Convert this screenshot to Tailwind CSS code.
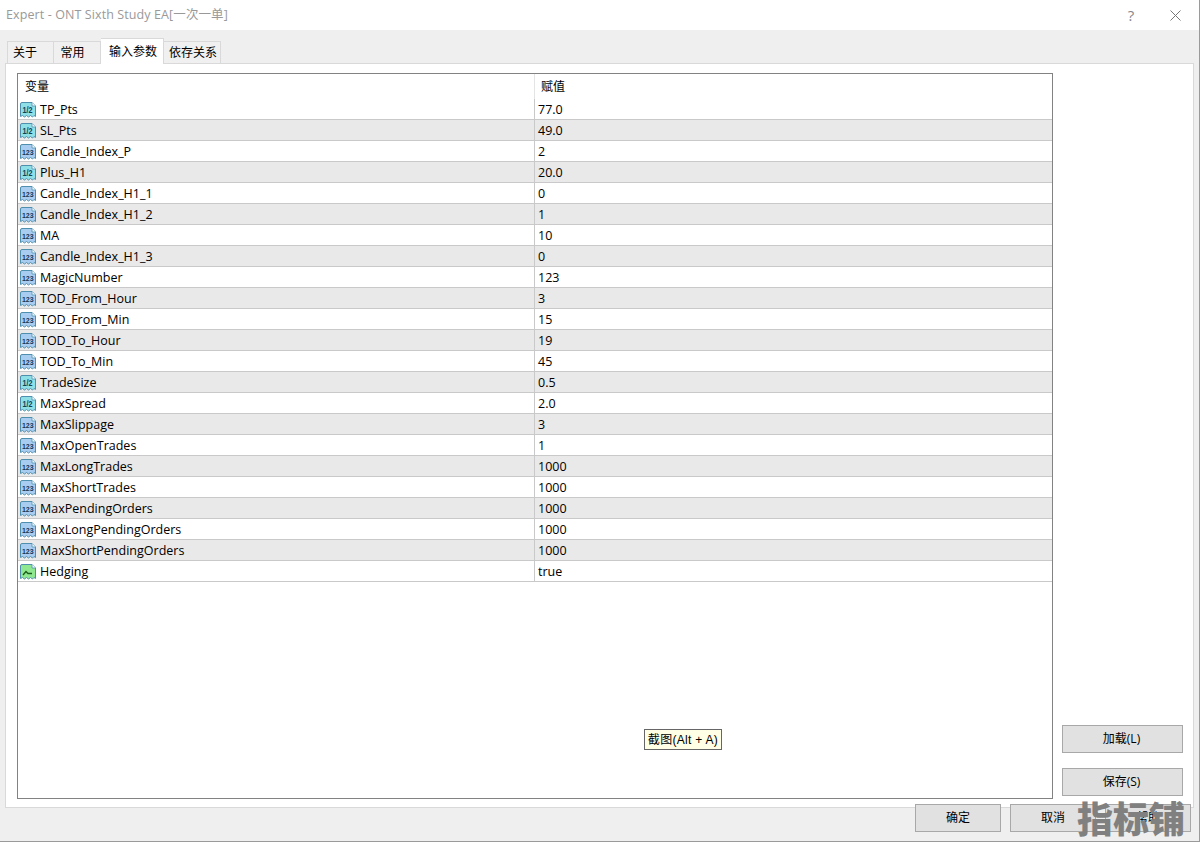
<!DOCTYPE html>
<html lang="zh-CN">
<head>
<meta charset="UTF-8">
<title>Expert - ONT Sixth Study EA</title>
<script src="https://cdn.jsdelivr.net/npm/@tailwindcss/browser@4"></script>
</head>
<body class="h-[842px] w-[1200px] overflow-hidden bg-[#efefef] text-[12.5px] text-black font-['Open_Sans','Noto_Sans_CJK_SC',sans-serif]">

<svg class="hidden">
  <symbol id="file" viewBox="0 0 16 16">
    <path d="M0.5 2 Q0.5 0.5 2 0.5 H12 L15.5 4 V14.5 L14 13.5 L12.5 15 L10.5 13.5 L8.5 15 L6.5 13.5 L4.5 15 L2.5 13.5 L0.5 14.5 Z" fill="currentColor" stroke="#4f8fae" stroke-width="1"/>
    <path d="M12 0.5 V4 H15.5" fill="#f4fbff" stroke="#4f8fae" stroke-width="0.8"/>
  </symbol>
</svg>

<div class="relative h-[842px] border-r border-b border-[#9a9a9a]">
  <!-- title bar -->
  <header class="flex h-[30px] items-center bg-white pl-[6px] text-[#999999]">
    <span class="flex-1 tracking-[0.1px]">Expert - ONT Sixth Study EA[一次一单]</span>
    <span class="w-[14px] text-center text-[15px] text-[#888888]">?</span>
    <svg class="ml-[32px] mr-[18px] h-[11px] w-[11px]" viewBox="0 0 11 11"><path d="M0.5 0.5 L10.5 10.5 M10.5 0.5 L0.5 10.5" stroke="#777777" fill="none"/></svg>
  </header>

  <!-- tabs -->
  <nav class="flex h-[33px] items-end pl-[7px] text-[12px]">
    <div class="flex h-[22px] w-[47px] items-center justify-center border border-b-0 border-[#d9d9d9] bg-[#f0f0f0] pr-[11px]">关于</div>
    <div class="flex h-[22px] w-[47px] items-center justify-center border border-l-0 border-b-0 border-[#d9d9d9] bg-[#f0f0f0] pr-[9px]">常用</div>
    <div class="relative z-10 -mb-px flex h-[26px] w-[63px] items-center justify-center border border-l-0 border-b-0 border-[#d9d9d9] bg-white pl-[2px]">输入参数</div>
    <div class="flex h-[22px] w-[57px] items-center justify-center border border-l-0 border-b-0 border-[#d9d9d9] bg-[#f0f0f0] pl-[2px]">依存关系</div>
  </nav>

  <!-- panel -->
  <main class="mx-[5px] flex h-[745px] border border-[#d9d9d9] bg-white pb-[8px] pl-[11px] pt-[9px]">
    <section class="h-[726px] w-[1036px] border border-[#828282]">
      <div class="flex h-[25px] items-center">
        <div class="w-[517px] border-r border-[#e4e4e4] pl-[7px] text-[12px] leading-[25px]">变量</div>
        <div class="pl-[6px] text-[12px] leading-[25px]">赋值</div>
      </div>
      <div id="rows"></div>
    </section>
    <aside class="ml-[9px] flex w-[121px] flex-col justify-end gap-[15px] pb-[3px]">
      <button class="h-[28px] border border-[#a8a8a8] bg-[#e1e1e1] pr-[2px] text-[12px]">加载(L)</button>
      <button class="h-[28px] border border-[#a8a8a8] bg-[#e1e1e1] pr-[2px] text-[12px]">保存(S)</button>
    </aside>
  </main>

  <!-- footer buttons -->
  <footer class="relative z-10 -mt-[4px] flex justify-end gap-[9px] pr-[8px]">
    <button class="h-[28px] w-[86px] border border-[#a8a8a8] bg-[#e1e1e1] text-[12px]">确定</button>
    <button class="h-[28px] w-[86px] border border-[#a8a8a8] bg-[#e1e1e1] text-[12px]">取消</button>
    <button class="h-[28px] w-[86px] border border-[#a8a8a8] bg-[#e1e1e1] text-[12px]">帮助</button>
  </footer>

  <!-- screenshot tooltip -->
  <div class="absolute left-[644px] top-[729px] z-20 flex h-[21px] w-[78px] items-center justify-center border border-[#666666] bg-[#ffffe6] text-[12px] tracking-[0.3px] font-['Liberation_Sans','Noto_Sans_CJK_SC',sans-serif]">截图(Alt + A)</div>

  <!-- watermark -->
  <div class="absolute left-[1077px] top-[794px] z-30 text-[36px] font-black leading-[46px] text-[#808080] font-['Noto_Sans_CJK_SC',sans-serif]">指标铺</div>
</div>

<script>
  // r = 整数 (123), d = 小数 (1/2), b = 布尔
  const params = [
    ["TP_Pts", "77.0", "d"], ["SL_Pts", "49.0", "d"], ["Candle_Index_P", "2", "r"],
    ["Plus_H1", "20.0", "d"], ["Candle_Index_H1_1", "0", "r"], ["Candle_Index_H1_2", "1", "r"],
    ["MA", "10", "r"], ["Candle_Index_H1_3", "0", "r"], ["MagicNumber", "123", "r"],
    ["TOD_From_Hour", "3", "r"], ["TOD_From_Min", "15", "r"], ["TOD_To_Hour", "19", "r"],
    ["TOD_To_Min", "45", "r"], ["TradeSize", "0.5", "d"], ["MaxSpread", "2.0", "d"],
    ["MaxSlippage", "3", "r"], ["MaxOpenTrades", "1", "r"], ["MaxLongTrades", "1000", "r"],
    ["MaxShortTrades", "1000", "r"], ["MaxPendingOrders", "1000", "r"],
    ["MaxLongPendingOrders", "1000", "r"], ["MaxShortPendingOrders", "1000", "r"],
    ["Hedging", "true", "b"]
  ];

  const icons = {
    r: `<svg class="h-[16px] w-[16px] text-[#a9cdf0]" viewBox="0 0 16 16"><use href="#file"/><text x="7.8" y="10.8" text-anchor="middle" font-size="7" font-weight="700" font-family="Liberation Sans" fill="#123a5c">123</text></svg>`,
    d: `<svg class="h-[16px] w-[16px] text-[#8fe0e6]" viewBox="0 0 16 16"><use href="#file"/><text x="7.6" y="11" text-anchor="middle" font-size="8.5" font-weight="700" font-family="Liberation Sans" fill="#123f55" textLength="10" lengthAdjust="spacingAndGlyphs">1/2</text></svg>`,
    b: `<svg class="h-[16px] w-[16px] text-[#8fe88f]" viewBox="0 0 16 16"><use href="#file"/><path d="M3 11 L6 7.5 L8 9.5 H12" fill="none" stroke="#1c5c1c" stroke-width="1.3"/></svg>`
  };

  document.getElementById("rows").innerHTML = params.map((p, i) => `
    <div class="flex h-[21px] items-center border-b border-[#c9c9c9] ${i % 2 ? "bg-[#e9e9e9]" : "bg-white"}">
      <div class="flex h-[20px] w-[517px] items-center border-r border-[#c9c9c9] pl-[2px] pt-[2px]">
        ${icons[p[2]]}<span class="ml-[4px]">${p[0]}</span>
      </div>
      <div class="pl-[3px] pt-[2px]">${p[1]}</div>
    </div>`).join("");
</script>
</body>
</html>
